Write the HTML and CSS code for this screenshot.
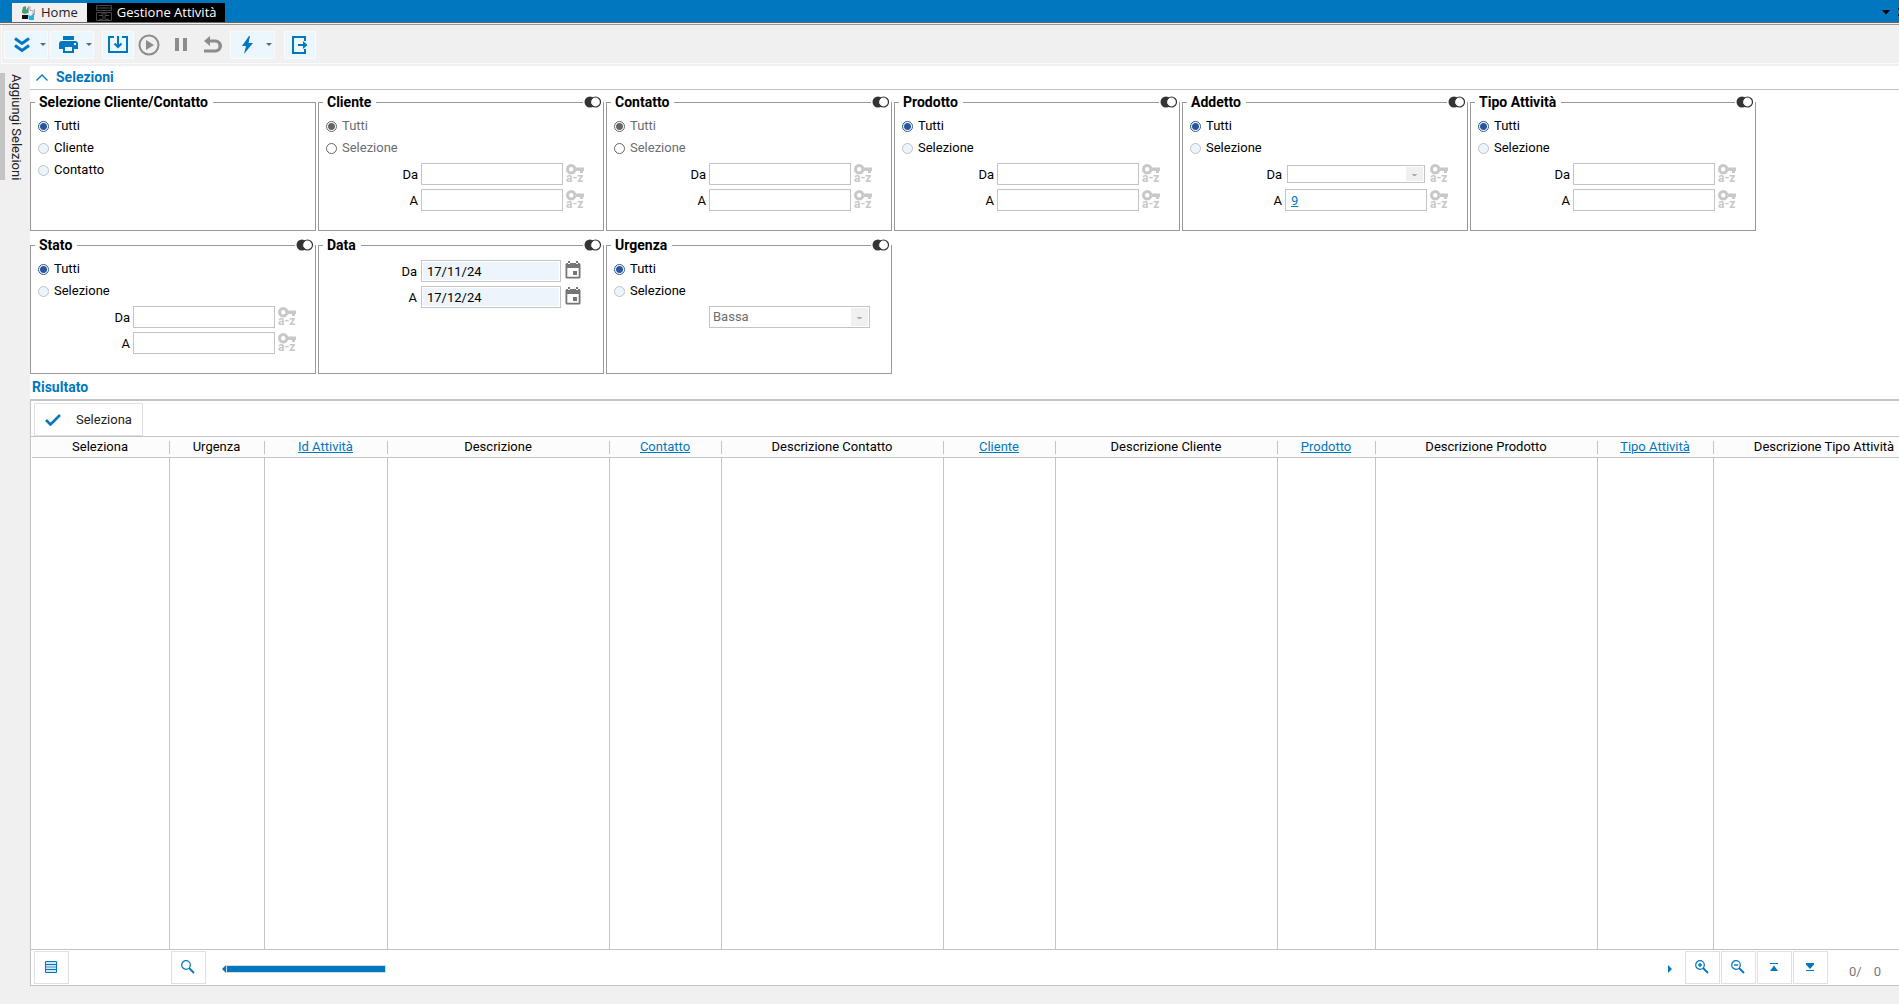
FILE: index.html
```html
<!DOCTYPE html>
<html lang="it">
<head>
<meta charset="utf-8">
<title>Gestione Attività</title>
<link rel="stylesheet" href="styles.css">
</head>
<body>
<svg class="defs" aria-hidden="true">
  <symbol id="toggle" viewBox="0 0 18 12">
    <circle cx="6" cy="6" r="5.500" fill="#333"/>
    <circle cx="11.500" cy="6" r="5" fill="#fff" stroke="#333" stroke-width="1.200"/>
  </symbol>
  <symbol id="key" viewBox="0 0 18 19">
    <circle cx="5.200" cy="5.200" r="3.700" fill="none" stroke="#c8c8c8" stroke-width="3"/>
    <path d="M9 3.500h9v3.500h-1v2h-3V7H9z" fill="#c8c8c8"/>
    <text x="0" y="18" class="key-text">a-z</text>
  </symbol>
  <symbol id="calendar" viewBox="0 0 16 18">
    <path d="M2 2h12a1.500 1.500 0 0 1 1.500 1.500v12.500a1.500 1.500 0 0 1-1.500 1.500H2a1.500 1.500 0 0 1-1.500-1.500V3.500A1.500 1.500 0 0 1 2 2zM2.300 7v8.700h11.400V7zM3 0h2v3H3zM11 0h2v3h-2zM8 10h4v4H8z" fill="#757575" fill-rule="evenodd"/>
  </symbol>
</svg>

<header class="titlebar">
  <nav class="tabs">
    <a class="tab" href="#home">
      <svg width="14" height="16" viewBox="0 0 14 16"><path d="M1 2l3-1v4l2-3v6l-3 1-3-1V6z" fill="#3fa36b"/><path d="M0 10h6v4H0z" fill="#111"/><path d="M6.500 1v7M8 1.500v4h3v4M12.500 4v6" fill="none" stroke="#aaa"/><path d="M6 9l2 2 2-1 2-2v7H7z" fill="#22b2e6"/></svg>
      Home
    </a>
    <a class="tab tab-active" href="#attivita">
      <svg width="16" height="16" viewBox="0 0 16 16"><path d="M.5.500h15v5H.5zM1 3h14M.5 7.500h15M.5 7.500v8h15v-8M3 10.500h4v4H3M13 10.500H9v4h4M5 9h6" fill="none" stroke="#484848"/></svg>
      Gestione Attività
    </a>
  </nav>
  <div class="window-actions">
    <button class="plain" aria-label="Elenco schede"><svg width="8" height="5" viewBox="0 0 8 5"><path d="M0 0h8L4 4.500z"/></svg></button>
    <button class="plain close" aria-label="Chiudi"><svg width="8" height="8" viewBox="0 0 8 8"><path d="M0 0l8 8M8 0L0 8" stroke="#000" stroke-width="1.500"/></svg></button>
  </div>
</header>

<div class="toolbar">
  <button class="tool split" aria-label="Espandi">
    <svg width="18" height="16" viewBox="0 0 18 16"><path d="M2 1.500l7 5 7-5M2 8.500l7 5 7-5" fill="none" stroke="#0077bf" stroke-width="3"/></svg>
    <svg class="caret" width="6" height="3" viewBox="0 0 6 3"><path d="M0 0h6L3 3z"/></svg>
  </button>
  <button class="tool split" aria-label="Stampa">
    <svg width="19" height="17" viewBox="0 0 19 17"><path d="M4 0h11v4H4zM3 5h13a3 3 0 0 1 3 3v5h-4v4H4v-4H0V8a3 3 0 0 1 3-3zm3 6v4h7v-4zM15 7v2h2V7z" fill="#0077bf" fill-rule="evenodd"/></svg>
    <svg class="caret" width="6" height="3" viewBox="0 0 6 3"><path d="M0 0h6L3 3z"/></svg>
  </button>
  <button class="tool download" aria-label="Carica">
    <svg width="20" height="17" viewBox="0 0 20 17"><path d="M6 1H1v15h18V1h-5" fill="none" stroke="#0077bf" stroke-width="2"/><path d="M10 0v10M6.500 7.500L10 11l3.500-3.500" fill="none" stroke="#0077bf" stroke-width="2"/></svg>
  </button>
  <button class="tool flat" aria-label="Avvia">
    <svg width="22" height="22" viewBox="0 0 22 22"><circle cx="11" cy="11" r="9.500" fill="none" stroke="#8c8c8c" stroke-width="2"/><path d="M8 6l8 5-8 5z" fill="#8c8c8c"/></svg>
  </button>
  <button class="tool flat" aria-label="Pausa">
    <svg width="12" height="13" viewBox="0 0 12 13"><path d="M0 0h4v13H0zM8 0h4v13H8z" fill="#8c8c8c"/></svg>
  </button>
  <button class="tool flat" aria-label="Annulla">
    <svg width="18" height="18" viewBox="0 0 18 18"><path d="M0 5l6-5v3.500h5.500a6.500 6.500 0 0 1 0 13H0v-3h11a3.500 3.500 0 0 0 0-7H6V10z" fill="#8c8c8c"/></svg>
  </button>
  <button class="tool split action" aria-label="Azioni">
    <svg width="12" height="18" viewBox="0 0 12 18"><path d="M8 0L1 10h4l-2 8 9-11H7.500L9 0z" fill="#0077bf"/></svg>
    <svg class="caret" width="6" height="3" viewBox="0 0 6 3"><path d="M0 0h6L3 3z"/></svg>
  </button>
  <button class="tool exit" aria-label="Esci">
    <svg width="16" height="18" viewBox="0 0 16 18"><path d="M13 5V1H1v16h12v-4M6 9h8" fill="none" stroke="#0077bf" stroke-width="2"/><path d="M11 5l4.500 4L11 13z" fill="#0077bf"/></svg>
  </button>
</div>

<div class="workspace">
  <aside class="side"><button class="side-tab">Aggiungi Selezioni</button></aside>
  <main class="content">
    <h2 class="section-title">
      <svg width="12" height="7" viewBox="0 0 12 7"><path d="M.5 6.500L6 1l5.500 5.500" fill="none" stroke="#0077bf" stroke-width="1.300"/></svg>
      Selezioni
    </h2>
    <form class="filters">
      <fieldset class="filter">
        <legend>Selezione Cliente/Contatto</legend>
        <div class="radios">
          <label><input type="radio" name="sel" checked>Tutti</label>
          <label><input type="radio" name="sel">Cliente</label>
          <label><input type="radio" name="sel">Contatto</label>
        </div>
      </fieldset>
      <fieldset class="filter">
        <legend>Cliente</legend>
        <button type="button" class="switch" aria-label="Inverti Cliente"><svg width="18" height="12"><use href="#toggle"/></svg></button>
        <div class="radios off">
          <label><input type="radio" name="cli" checked disabled>Tutti</label>
          <label><input type="radio" name="cli" disabled>Selezione</label>
        </div>
        <div class="range">
          <label for="cli-da">Da</label><input id="cli-da" type="text"><svg width="18" height="19"><use href="#key"/></svg>
          <label for="cli-a">A</label><input id="cli-a" type="text"><svg width="18" height="19"><use href="#key"/></svg>
        </div>
      </fieldset>
      <fieldset class="filter">
        <legend>Contatto</legend>
        <button type="button" class="switch" aria-label="Inverti Contatto"><svg width="18" height="12"><use href="#toggle"/></svg></button>
        <div class="radios off">
          <label><input type="radio" name="con" checked disabled>Tutti</label>
          <label><input type="radio" name="con" disabled>Selezione</label>
        </div>
        <div class="range">
          <label for="con-da">Da</label><input id="con-da" type="text"><svg width="18" height="19"><use href="#key"/></svg>
          <label for="con-a">A</label><input id="con-a" type="text"><svg width="18" height="19"><use href="#key"/></svg>
        </div>
      </fieldset>
      <fieldset class="filter">
        <legend>Prodotto</legend>
        <button type="button" class="switch" aria-label="Inverti Prodotto"><svg width="18" height="12"><use href="#toggle"/></svg></button>
        <div class="radios">
          <label><input type="radio" name="pro" checked>Tutti</label>
          <label><input type="radio" name="pro">Selezione</label>
        </div>
        <div class="range">
          <label for="pro-da">Da</label><input id="pro-da" type="text"><svg width="18" height="19"><use href="#key"/></svg>
          <label for="pro-a">A</label><input id="pro-a" type="text"><svg width="18" height="19"><use href="#key"/></svg>
        </div>
      </fieldset>
      <fieldset class="filter">
        <legend>Addetto</legend>
        <button type="button" class="switch" aria-label="Inverti Addetto"><svg width="18" height="12"><use href="#toggle"/></svg></button>
        <div class="radios">
          <label><input type="radio" name="add" checked>Tutti</label>
          <label><input type="radio" name="add">Selezione</label>
        </div>
        <div class="range">
          <label for="add-da">Da</label><select id="add-da" class="short" disabled><option></option></select><svg width="18" height="19"><use href="#key"/></svg>
          <label for="add-a">A</label><input id="add-a" class="linked" type="text" value="9"><svg width="18" height="19"><use href="#key"/></svg>
        </div>
      </fieldset>
      <fieldset class="filter">
        <legend>Tipo Attività</legend>
        <button type="button" class="switch" aria-label="Inverti Tipo Attività"><svg width="18" height="12"><use href="#toggle"/></svg></button>
        <div class="radios">
          <label><input type="radio" name="tip" checked>Tutti</label>
          <label><input type="radio" name="tip">Selezione</label>
        </div>
        <div class="range">
          <label for="tip-da">Da</label><input id="tip-da" type="text"><svg width="18" height="19"><use href="#key"/></svg>
          <label for="tip-a">A</label><input id="tip-a" type="text"><svg width="18" height="19"><use href="#key"/></svg>
        </div>
      </fieldset>
      <fieldset class="filter">
        <legend>Stato</legend>
        <button type="button" class="switch" aria-label="Inverti Stato"><svg width="18" height="12"><use href="#toggle"/></svg></button>
        <div class="radios">
          <label><input type="radio" name="sta" checked>Tutti</label>
          <label><input type="radio" name="sta">Selezione</label>
        </div>
        <div class="range">
          <label for="sta-da">Da</label><input id="sta-da" type="text"><svg width="18" height="19"><use href="#key"/></svg>
          <label for="sta-a">A</label><input id="sta-a" type="text"><svg width="18" height="19"><use href="#key"/></svg>
        </div>
      </fieldset>
      <fieldset class="filter">
        <legend>Data</legend>
        <button type="button" class="switch" aria-label="Inverti Data"><svg width="18" height="12"><use href="#toggle"/></svg></button>
        <div class="range dates">
          <label for="dat-da">Da</label><input id="dat-da" type="text" value="17/11/24"><svg width="16" height="18"><use href="#calendar"/></svg>
          <label for="dat-a">A</label><input id="dat-a" type="text" value="17/12/24"><svg width="16" height="18"><use href="#calendar"/></svg>
        </div>
      </fieldset>
      <fieldset class="filter">
        <legend>Urgenza</legend>
        <button type="button" class="switch" aria-label="Inverti Urgenza"><svg width="18" height="12"><use href="#toggle"/></svg></button>
        <div class="radios">
          <label><input type="radio" name="urg" checked>Tutti</label>
          <label><input type="radio" name="urg">Selezione</label>
        </div>
        <select class="urgency" aria-label="Urgenza" disabled><option>Bassa</option></select>
      </fieldset>
    </form>

    <h2 class="result-title">Risultato</h2>
    <section class="result">
      <div class="result-tools">
        <button class="box select-btn"><svg width="16" height="12" viewBox="0 0 16 12"><path d="M1 6l4.500 4.500L15 1" fill="none" stroke="#0077bf" stroke-width="2.600"/></svg>Seleziona</button>
      </div>
      <div class="grid-wrap">
        <table class="grid">
          <colgroup><col class="w138"><col class="w95"><col class="w123"><col class="w222"><col class="w112"><col class="w222"><col class="w112"><col class="w222"><col class="w98"><col class="w222"><col class="w116"><col class="w222"></colgroup>
          <thead><tr>
            <th>Seleziona</th><th>Urgenza</th><th><a href="#id">Id Attività</a></th><th>Descrizione</th><th><a href="#contatto">Contatto</a></th><th>Descrizione Contatto</th><th><a href="#cliente">Cliente</a></th><th>Descrizione Cliente</th><th><a href="#prodotto">Prodotto</a></th><th>Descrizione Prodotto</th><th><a href="#tipo">Tipo Attività</a></th><th>Descrizione Tipo Attività</th>
          </tr></thead>
          <tbody><tr><td></td><td></td><td></td><td></td><td></td><td></td><td></td><td></td><td></td><td></td><td></td><td></td></tr></tbody>
        </table>
      </div>
      <footer class="grid-footer">
        <button class="box small" aria-label="Vista elenco"><svg width="12" height="12" viewBox="0 0 12 12"><path d="M.5.500h11v11H.5z" fill="#d5e7f5"/><path d="M1 5h10v2H1z" fill="#8fc0e3"/><path d="M.5.500h11v11H.5zM0 3.500h12M0 8.500h12" fill="none" stroke="#0077bf"/></svg></button>
        <button class="box small search" aria-label="Cerca"><svg width="14" height="14" viewBox="0 0 14 14"><circle cx="5" cy="5" r="4.300" fill="none" stroke="#0077bf" stroke-width="1.200"/><path d="M8 8l5 5" stroke="#0077bf" stroke-width="1.800"/></svg></button>
        <div class="scroll">
          <button class="plain" aria-label="Scorri a sinistra"><svg width="4" height="8" viewBox="0 0 4 8"><path d="M4 0v8L0 4z" fill="#0077bf"/></svg></button>
          <div class="thumb"></div>
          <button class="plain scroll-right" aria-label="Scorri a destra"><svg width="4" height="8" viewBox="0 0 4 8"><path d="M0 0v8l4-4z" fill="#0077bf"/></svg></button>
        </div>
        <div class="pager">
          <button class="box small" aria-label="Ingrandisci"><svg width="14" height="14" viewBox="0 0 14 14"><circle cx="5" cy="5" r="4.300" fill="none" stroke="#0077bf" stroke-width="1.200"/><path d="M8 8l5 5" stroke="#0077bf" stroke-width="1.800"/><path d="M3 5h4M5 3v4" stroke="#0077bf" stroke-width="1.400"/></svg></button>
          <button class="box small" aria-label="Riduci"><svg width="14" height="14" viewBox="0 0 14 14"><circle cx="5" cy="5" r="4.300" fill="none" stroke="#0077bf" stroke-width="1.200"/><path d="M8 8l5 5" stroke="#0077bf" stroke-width="1.800"/><path d="M3 5h4" stroke="#0077bf" stroke-width="1.400"/></svg></button>
          <button class="box small" aria-label="Primo"><svg width="8" height="8" viewBox="0 0 8 8"><path d="M0 0h8v1H0zM4 2.500L8 8H0z" fill="#0077bf"/></svg></button>
          <button class="box small" aria-label="Ultimo"><svg width="8" height="8" viewBox="0 0 8 8"><path d="M0 7h8v1H0zM0 0h8v1.500L4 6 0 1.500z" fill="#0077bf"/></svg></button>
        </div>
        <div class="count"><span>0/</span><span>0</span></div>
      </footer>
    </section>
  </main>
</div>
</body>
</html>
```
FILE: styles.css
```css
* { box-sizing: border-box; }

body {
  margin: 0;
  min-height: 100vh;
  display: flex;
  flex-direction: column;
  background: #f0f0f0;
  color: #000;
  font: 13px/16px Roboto, "Liberation Sans", sans-serif;
  overflow-x: hidden;
}

button, input, select { font: inherit; color: inherit; }
button { margin: 0; padding: 0; border: 0; background: none; }
svg { display: block; flex: none; }
.defs { display: none; }
.key-text { font: bold 12px Roboto, sans-serif; fill: #c8c8c8; }

/* title bar */
.titlebar {
  display: flex;
  justify-content: space-between;
  height: 25px;
  background: #0077bf;
  border-bottom: 1px solid #999;
  box-shadow: inset 0 -1px #f0f0f0, inset 0 -2px #666;
}
.tabs { display: flex; padding: 3px 0 2px 12px; }
.tab {
  display: flex;
  align-items: center;
  gap: 5px;
  padding: 0 9px 0 10px;
  background: #f0f0f0;
  color: #222;
  font: 13px/19px "Open Sans", "Noto Sans", sans-serif;
  text-decoration: none;
}
.tab-active { background: #000; color: #fff; padding: 0 9px; }
.window-actions { display: flex; align-items: center; gap: 8px; }
.close { width: 1px; overflow: hidden; }

/* toolbar */
.toolbar {
  display: flex;
  align-items: center;
  gap: 2px;
  margin-left: 1px;
  padding: 6px 0 4px 2px;
  border: solid #fafafa;
  border-width: 0 0 1px 1px;
}
.tool {
  display: flex;
  align-items: center;
  justify-content: center;
  width: 32px;
  height: 28px;
  padding-bottom: 1px;
  background: #ebf6fd;
  border: 1px solid #fafafa;
}
.split { width: 44px; justify-content: space-between; padding: 0 1px 1px 8px; }
.flat { width: 30px; background: none; border-color: transparent; }
.download { margin: 0 -2px 0 6px; }
.caret { fill: #666; }
.action { width: 45px; padding: 0 2px 1px 10px; }
.exit { margin-left: 7px; }

/* workspace */
.workspace { display: flex; flex: 1; padding: 2px 0 18px; }
.side { flex: none; width: 30px; padding-top: 7px; }
.side-tab {
  writing-mode: vertical-rl;
  border-left: 5px solid #c4c4c4;
  padding: 1px 0 0 3px;
  font-size: 13px;
  color: #222;
}
.content {
  display: flex;
  flex-direction: column;
  flex: 1;
  min-width: 0;
  background: #fff;
}
h2 { margin: 0; font-size: 14px; line-height: 23px; font-weight: 700; color: #0077bf; }
.section-title {
  display: flex;
  align-items: center;
  gap: 8px;
  height: 24px;
  padding-left: 6px;
  border-bottom: 1px solid #c4c4c4;
}

/* filters */
.filters { display: flex; flex-wrap: wrap; gap: 6px 2px; padding-top: 4px; }
.filter {
  position: relative;
  width: 286px;
  height: 137px;
  min-width: 0;
  margin: 0;
  padding: 0;
  border: 1px solid #999;
}
.filter legend { margin-left: 4px; padding: 0 5px 0 4px; font-size: 14px; line-height: 16px; font-weight: 700; }
.switch { position: absolute; top: -14px; right: 0; margin-top: 8px; background: #fff; padding: 0 1px; }
.filter .switch { top: -7px; margin-top: -7px; }
.radios { display: flex; flex-direction: column; padding: 5px 0 0 7px; }
.radios label { display: flex; align-items: center; gap: 5px; height: 22px; }
.off label { color: #6d6d6d; }
input[type="radio"] {
  appearance: none;
  width: 11px;
  height: 11px;
  margin: 0;
  border: 1px solid #bcc3ca;
  border-radius: 50%;
  background: #edf4fc;
}
input[type="radio"]:checked {
  border-color: #2b579a;
  background: radial-gradient(circle, #2b579a 3px, #fff 4px);
}
input[type="radio"]:disabled { border-color: #666; background: #fff; }
input[type="radio"]:disabled:checked { background: radial-gradient(circle, #666 3px, #fff 4px); }

.range {
  display: grid;
  grid-template-columns: 99px 142px 18px;
  grid-auto-rows: 22px;
  gap: 4px 3px;
  align-items: center;
  padding-top: 4px;
}
.range label { padding-top: 2px; text-align: right; }
.range svg { margin-bottom: 2px; }
.range input { width: 100%; height: 22px; padding: 0 5px; border: 1px solid #c4c4c4; background: #fff; }
.dates { padding-top: 7px; column-gap: 4px; grid-template-columns: 98px 140px 18px; }
.dates input { background: #edf4fc; box-shadow: inset 0 0 0 1px #fff; }
.range .linked { color: #0077bf; text-decoration: underline; }
select {
  appearance: none;
  height: 22px;
  padding: 0 3px;
  border: 1px solid #c4c4c4;
  border-radius: 0;
  color: #6d6d6d;
  opacity: 1;
  background:
    linear-gradient(#b0b0b0, #b0b0b0) right 7px top 50% / 5px 1px no-repeat,
    linear-gradient(#b0b0b0, #b0b0b0) right 8px top calc(50% + 1px) / 3px 1px no-repeat,
    linear-gradient(#f0f0f0, #f0f0f0) right 1px center / 17px calc(100% - 2px) no-repeat,
    #fff;
}
.short { height: 18px; margin: 0 2px; }
.urgency { display: block; width: 161px; margin: 4px 0 0 102px; }

/* result */
.result-title { padding: 2px 0 0 2px; }
.result {
  display: flex;
  flex-direction: column;
  flex: 1;
  border: solid #c4c4c4;
  border-width: 2px 0 1px 1px;
}
.result-tools { padding: 2px 0 0 3px; border-bottom: 1px solid #c4c4c4; }
.box { display: flex; align-items: center; background: #fff; border: 1px solid #e1e1e1; }
.select-btn { width: 109px; height: 33px; gap: 15px; padding-left: 10px; color: #222; }
.grid-wrap { display: grid; flex: 1; padding-left: 1px; overflow: hidden; border-bottom: 1px solid #c4c4c4; }
.grid { width: 1904px; table-layout: fixed; border-collapse: separate; border-spacing: 0; }
.w95 { width: 95px; }
.w98 { width: 98px; }
.w112 { width: 112px; }
.w116 { width: 116px; }
.w123 { width: 123px; }
.w138 { width: 138px; }
.w222 { width: 222px; }
th {
  height: 21px;
  padding: 0 2px 0 0;
  font-weight: 400;
  border-bottom: 1px solid #c4c4c4;
  background: linear-gradient(#c4c4c4, #c4c4c4) right center / 1px 13px no-repeat, #fcfcfc;
}
th a { color: #0077bf; }
td { padding: 0; border-right: 1px solid #c4c4c4; }

.grid-footer { display: flex; align-items: center; height: 35px; padding: 0 18px 0 3px; }
.small { width: 35px; height: 33px; padding: 0 1px 2px 0; justify-content: center; }
.search { margin-left: 102px; }
.scroll { display: flex; align-items: center; flex: 1; padding: 2px 13px 0 16px; }
.thumb { width: 160px; height: 8px; background: #0077bf; border: 1px solid #d9d9d9; }
.scroll-right { margin-left: auto; }
.pager { display: flex; gap: 1px; }
.count { display: flex; gap: 12px; padding: 8px 0 0 21px; color: #777; }
```
